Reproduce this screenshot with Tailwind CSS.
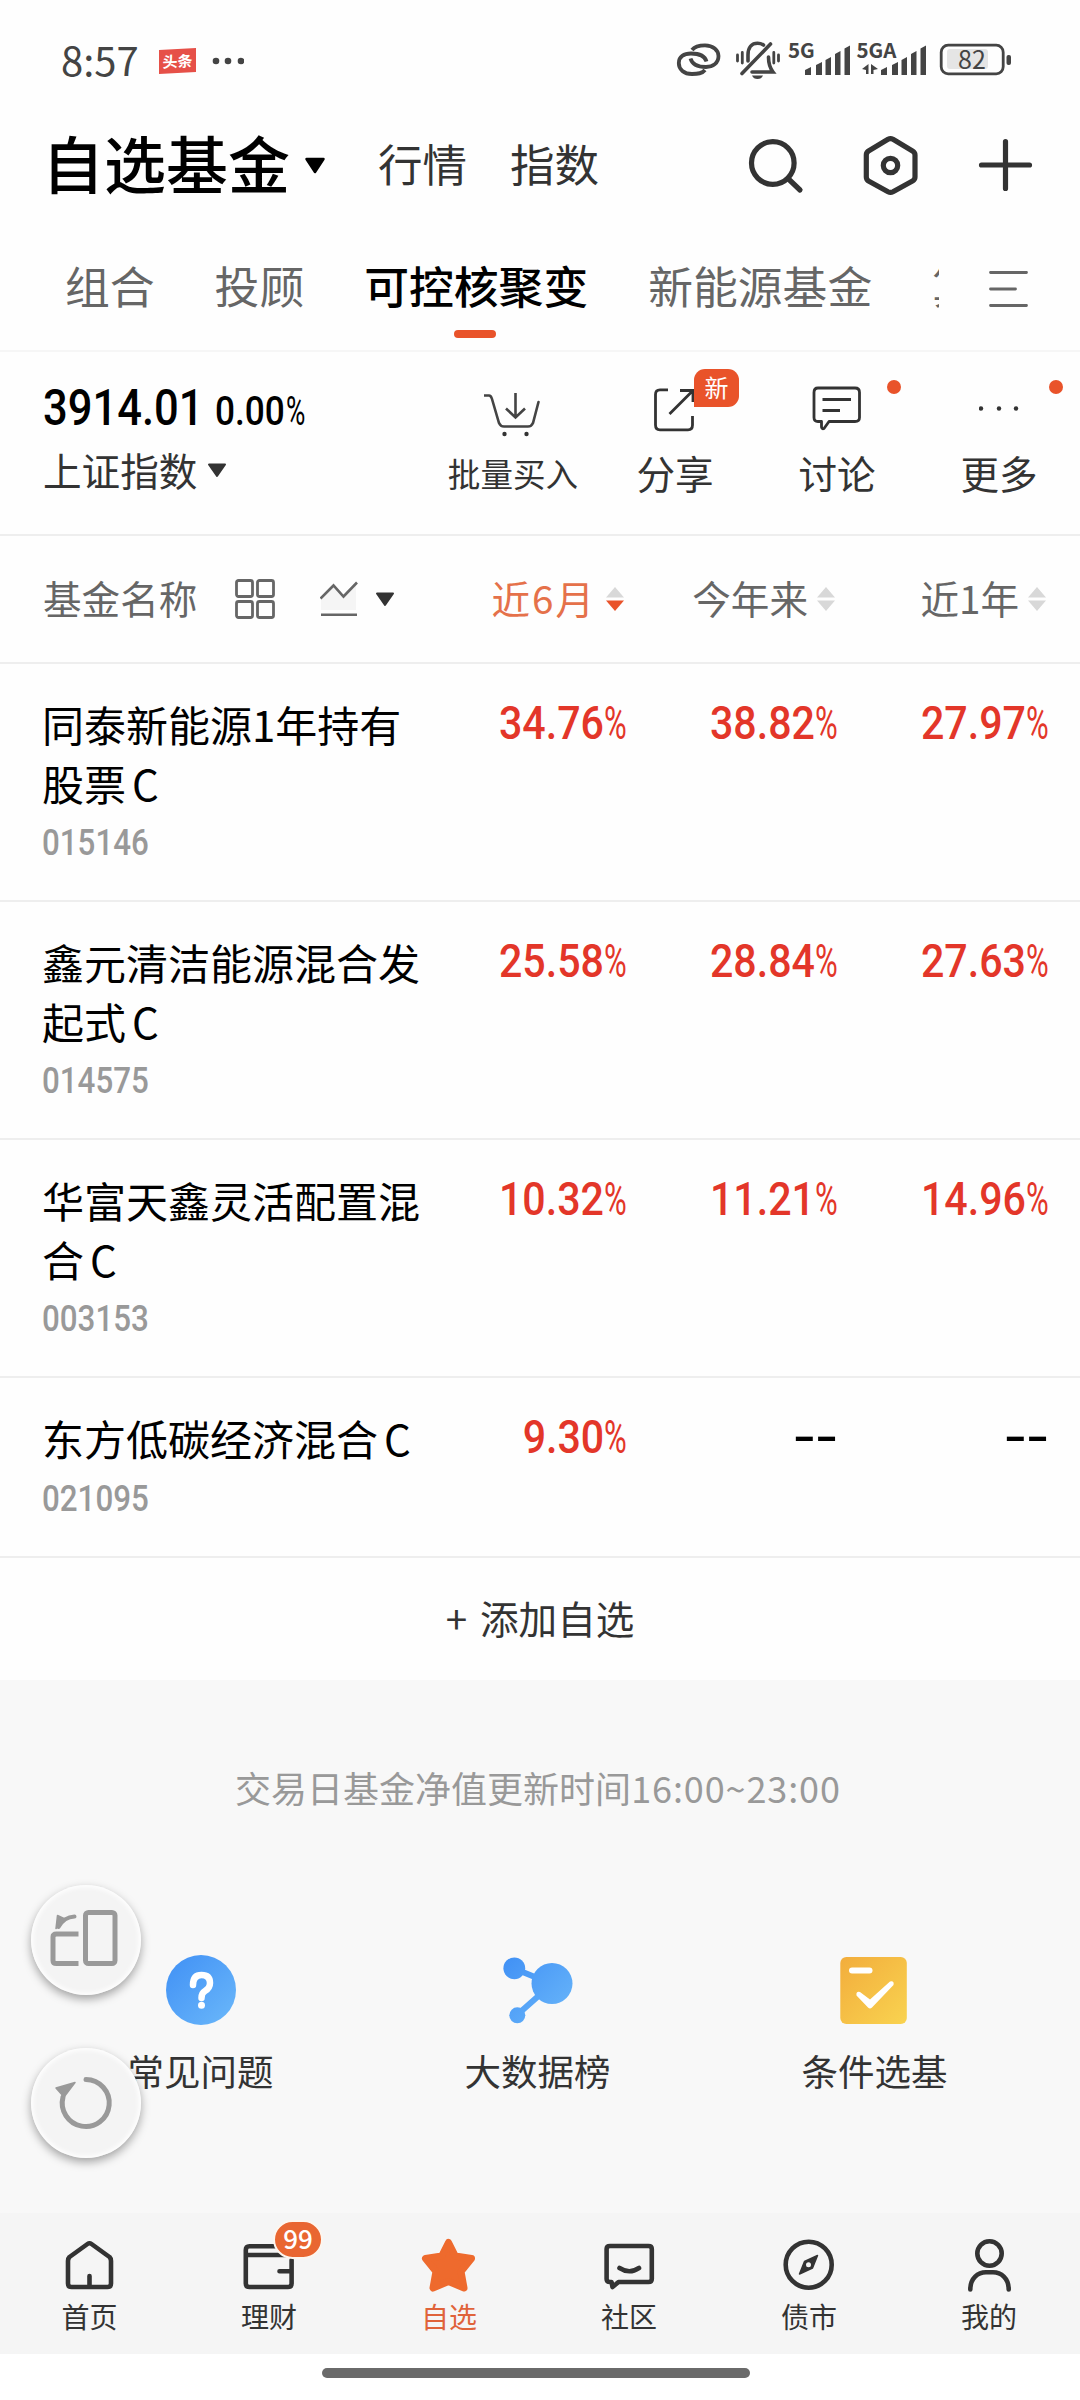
<!DOCTYPE html>
<html lang="zh-CN">
<head>
<meta charset="utf-8">
<title>自选基金</title>
<script src="https://cdn.jsdelivr.net/npm/@tailwindcss/browser@4"></script>
</head>
<body class="bg-white">
<div class="relative flex h-[2400px] w-[1080px] flex-col overflow-hidden bg-[#fefefe] font-['Noto_Sans_CJK_SC',sans-serif] leading-none text-[#333]">

  <!-- status bar -->
  <header class="flex h-[118px] shrink-0 items-start justify-between pl-[61px] pr-[66px] text-[#444]">
    <div class="flex items-center pt-[37px]">
      <span class="w-[98px] pb-[3px] text-[40px] leading-[44px]">8:57</span>
      <span class="flex h-[24px] w-[37px] -skew-y-3 items-center justify-center bg-[#e65048] pb-[2px] text-[15px] font-bold text-white">头条</span>
      <svg class="ml-[16px]" width="32" height="8" fill="#444"><circle cx="4" cy="4" r="3.3"/><circle cx="16" cy="4" r="3.3"/><circle cx="29" cy="4" r="3.3"/></svg>
    </div>
    <svg width="340" height="110" viewBox="674 0 340 110" fill="none" stroke="#444" font-family="Noto Sans CJK SC, sans-serif">
      <g stroke-width="3.8">
        <path d="M692 50 C695 46 699 45.300 705 45.300 C713 45.300 718.500 50 718.500 56 C718.500 63 713 67 706 67 C698 67 692 64 690.500 58.500"/>
        <path d="M705 70 C702 73.700 698 74 692 74 C684 74 678.800 69.500 678.800 63 C678.800 56.500 684 53.500 691 53.500 C699 53.500 705 56 706.500 61.500"/>
      </g>
      <g stroke-width="3.6" stroke-linecap="round">
        <path d="M742 73.500 L770.500 44"/>
        <path d="M748 61 V55 C748 47 752 43.300 757.500 43.300 Q761 43.300 763.500 45"/>
        <path d="M752 72 H773 Q768.500 66 768.500 57"/>
        <path stroke-width="2.800" d="M737.500 55 V61 M742.300 52.500 V63 M773.800 52.500 V63 M778.500 55 V61"/>
      </g>
      <path fill="#444" stroke="none" d="M752 75.500 H763 Q761.500 79 757.500 79 Q753.500 79 752 75.500Z"/>
      <g fill="#444" stroke="none">
        <text x="788" y="57.500" font-size="20.500" font-weight="700">5G</text>
        <path d="M805 70 l6-3 v8 h-6z M816 65 l6-3 v13 h-6z M825.500 60 l5.500-3 v18 h-5.500z M835 54 l5.500-3 v24 h-5.500z M844.500 48.500 l5.500-3 v29.500 h-5.500z"/>
        <text x="856.500" y="57.500" font-size="20.500" font-weight="700">5GA</text>
        <path d="M862 69 L868.500 64 V74 H866 V70Z M871 64 V74 H873.500 V70 L878 69 Z"/>
        <path d="M881 70 l6-3 v8 h-6z M892 65 l6-3 v13 h-6z M901.500 60 l5.500-3 v18 h-5.500z M911 54 l5.500-3 v24 h-5.500z M920.500 48.500 l5.500-3 v29.500 h-5.500z"/>
      </g>
      <rect x="941.200" y="45.200" width="62" height="28.600" rx="7" stroke-width="2.800"/>
      <rect x="947" y="49" width="41" height="20" rx="3" fill="#e5e5e5" stroke="none"/>
      <rect x="1006.500" y="55" width="4.500" height="10" rx="2" fill="#444" stroke="none"/>
      <text x="958" y="69" font-size="25" fill="#444" stroke="none">82</text>
    </svg>
  </header>

  <!-- title row -->
  <div class="flex h-[94px] shrink-0 items-center pl-[42px]">
    <h1 class="pb-[7px] text-[62px] font-medium text-black">自选基金</h1>
    <svg class="ml-[14px] mt-[2px]" width="22" height="18" viewBox="0 0 22 18"><path d="M2.500 2 H19.500 L11 15Z" stroke="#000" stroke-width="2.500" stroke-linejoin="round"/></svg>
    <span class="ml-[52px] pb-[4px] text-[44.500px]">行情</span>
    <span class="ml-[43px] pb-[4px] text-[44.500px]">指数</span>
    <svg class="ml-[147px]" width="60" height="62" viewBox="746 134 60 62" fill="none" stroke="#333" stroke-width="5.200" stroke-linecap="round"><circle cx="772.800" cy="163" r="21.300"/><path d="M788.500 179 L800 190"/></svg>
    <svg class="ml-[55px]" width="60" height="64" viewBox="861 133 60 64" fill="none" stroke="#333" stroke-width="5.200" stroke-linejoin="round"><path d="M888 139.300 Q890.500 138 893 139.300 L912.500 151 Q915 152.500 915 155 V177 Q915 179.500 912.500 181 L893 191.700 Q890.500 193 888 191.700 L868.500 181 Q866.300 179.500 866.300 177 V155 Q866.300 152.500 868.500 151Z"/><circle cx="890.500" cy="165.500" r="7.200"/></svg>
    <svg class="ml-[56px]" width="56" height="56" viewBox="977 138 56 56" stroke="#333" stroke-width="5.200" stroke-linecap="round"><path d="M981.500 166 H1029.500 M1005.500 142.500 V189.500"/></svg>
  </div>

  <!-- group tabs -->
  <nav class="flex h-[140px] shrink-0 items-start border-b-2 border-[#f6f6f6] text-[44.800px] text-[#666]">
    <div class="flex h-[134px] w-[939px] gap-[60px] overflow-hidden whitespace-nowrap pl-[65px] pt-[51px]">
      <span>组合</span>
      <span>投顾</span>
      <span class="flex flex-col items-center font-medium text-black">可控核聚变<i class="mr-[3px] mt-[22px] block h-[8px] w-[42px] rounded-full bg-[#e9532a]"></i></span>
      <span>新能源基金</span>
      <span>算力</span>
    </div>
    <svg class="ml-[50px] mt-[58px]" width="40" height="38" viewBox="989 270 40 38" stroke="#666" stroke-width="2.800" stroke-linecap="round"><path d="M990.500 272.500 H1026.500 M990.500 289 H1015.500 M990.500 305.500 H1026.500"/></svg>
  </nav>

  <!-- index summary and actions -->
  <section class="flex h-[184px] shrink-0 border-b-2 border-[#eee]">
    <div class="w-[432px] pl-[43px] pt-[31px] text-black">
      <div class="flex h-[50px] items-baseline font-[Roboto,sans-serif] font-medium">
        <span class="w-[172px]"><span class="inline-block origin-left scale-x-[.87] text-[50px]">3914.01</span></span>
        <span class="w-[71px]"><span class="inline-block origin-left scale-x-[.88] text-[40px]">0.00</span></span>
        <span class="inline-block w-[20px] origin-left scale-x-[.66] text-[40px] font-normal">%</span>
      </div>
      <div class="mt-[17px] flex items-center text-[38.600px] text-[#333]">上证指数
        <svg class="ml-[10px] mt-[3px]" width="20" height="15" viewBox="0 0 20 15"><path d="M2 1.500 H18 L10 13Z" fill="#333" stroke="#333" stroke-width="2" stroke-linejoin="round"/></svg>
      </div>
    </div>
    <div class="relative flex w-[162px] flex-col items-center pt-[33px]">
      <svg width="58" height="52" viewBox="484 385 58 52" fill="none" stroke="#444" stroke-width="2.600"><path d="M484 395.500 H489 Q491 395.500 492 399 L499 423 Q500.500 426.500 504 426.500 H528 Q531.500 426.500 533 423 L538.500 402" stroke-linecap="round"/><path d="M515.500 393 V417 M506 408.500 L515.500 417.500 L525 408.500"/><circle cx="504.500" cy="434" r="2.200" fill="#333" stroke="none"/><circle cx="526.500" cy="434" r="2.200" fill="#333" stroke="none"/></svg>
      <span class="mt-[20px] text-[32.600px]">批量买入</span>
    </div>
    <div class="relative flex w-[162px] flex-col items-center pt-[33px]">
      <svg width="46" height="48" viewBox="651 385 46 48" fill="none" stroke="#333" stroke-width="2.800"><path d="M667 389.800 H659 Q654.500 389.800 654.500 394.500 V425 Q654.500 429.800 659 429.800 H687 Q691.500 429.800 691.500 425 V416"/><path d="M679 390.500 H692 V402 M691.500 391 L668.500 414"/></svg>
      <span class="mt-[20px] text-[38.600px]">分享</span>
      <span class="absolute left-[100px] top-[17px] flex h-[38px] w-[45px] items-center justify-center rounded-[11px] rounded-bl-none bg-[#e9532a] pb-[2px] text-[24px] text-white">新</span>
    </div>
    <div class="relative flex w-[162px] flex-col items-center pt-[33px]">
      <svg width="52" height="48" viewBox="811 385 52 48" fill="none" stroke="#333" stroke-width="2.800" stroke-linejoin="round"><path d="M818 388 H855 Q859.500 388 859.500 392.500 V417.500 Q859.500 421.500 855 421.500 H829 L824 428.500 Q822 429.500 821.500 427 V421.500 H818 Q814 421.500 814 417.500 V392.500 Q814 388 818 388Z"/><path d="M822.500 399.500 H851 M822.500 410.500 H840"/></svg>
      <span class="mt-[20px] text-[38.600px]">讨论</span>
      <i class="absolute left-[131px] top-[28px] size-[14px] rounded-full bg-[#e9532a]"></i>
    </div>
    <div class="relative flex w-[162px] flex-col items-center pt-[33px]">
      <svg width="40" height="48" viewBox="979 385 40 48" fill="#333"><circle cx="981" cy="408.500" r="2.200"/><circle cx="999" cy="408.500" r="2.200"/><circle cx="1016" cy="408.500" r="2.200"/></svg>
      <span class="mt-[20px] text-[38.600px]">更多</span>
      <i class="absolute left-[131px] top-[28px] size-[14px] rounded-full bg-[#e9532a]"></i>
    </div>
  </section>

  <!-- table header -->
  <div class="flex h-[128px] shrink-0 items-center border-b-2 border-[#eee] pl-[43px] text-[38.600px] text-[#666]">
    <span class="w-[155px] pb-[4px]">基金名称</span>
    <svg class="ml-[37px]" width="40" height="42" viewBox="0 0 40 42" fill="none" stroke="#666" stroke-width="2.800"><rect x="1.500" y="2.500" width="16" height="16" rx="2"/><rect x="22.500" y="2.500" width="16" height="16" rx="2"/><rect x="1.500" y="23.500" width="16" height="16" rx="2"/><rect x="22.500" y="23.500" width="16" height="16" rx="2"/></svg>
    <svg class="ml-[45px]" width="38" height="36" viewBox="320 582 38 36" fill="none" stroke="#666" stroke-width="2.600"><path d="M321 599.500 L333.500 587 L343.500 597.500 L356 584.500 V611 H321Z" fill="#f5f5f5" stroke="none"/><path d="M320.500 599.500 L333.500 586.500 L343.500 597.500 L357 583.500 M321 615.800 H357"/></svg>
    <svg class="ml-[17px]" width="20" height="15" viewBox="0 0 20 15"><path d="M2 1.500 H18 L10 13Z" fill="#333" stroke="#333" stroke-width="2" stroke-linejoin="round"/></svg>
    <div class="ml-[30px] flex w-[199px] items-center justify-end text-[#e5714a]"><span class="pb-[4px]">近<span class="mx-[2px]">6</span>月</span><svg class="ml-[12px]" width="18" height="26" viewBox="0 0 18 26"><path d="M9 1 L18 11.500 H0Z" fill="#d8d8d8"/><path d="M0 14.500 H18 L9 25Z" fill="#e9532a"/></svg></div>
    <div class="flex w-[211px] items-center justify-end"><span class="pb-[4px]">今年来</span><svg class="ml-[9px]" width="18" height="26" viewBox="0 0 18 26"><path d="M9 1 L18 11.500 H0Z M0 14.500 H18 L9 25Z" fill="#d8d8d8"/></svg></div>
    <div class="flex w-[211px] items-center justify-end"><span class="pb-[4px]">近1年</span><svg class="ml-[9px]" width="18" height="26" viewBox="0 0 18 26"><path d="M9 1 L18 11.500 H0Z M0 14.500 H18 L9 25Z" fill="#d8d8d8"/></svg></div>
  </div>

  <!-- fund rows -->
  <div class="flex h-[238px] shrink-0 border-b-2 border-[#eee] pl-[42px] pt-[31px]">
    <div class="w-[374px] whitespace-nowrap text-[42px] leading-[58.500px] text-black">同泰新能源1年持有<br>股票<span class="ml-[6px]">C</span>
      <div class="mt-[13px] origin-left scale-x-[.87] font-[Roboto,sans-serif] text-[36px] font-medium leading-[36px] text-[#999]">015146</div></div>
    <div class="flex w-[211px] items-baseline justify-end pt-[4px] font-[Roboto,sans-serif] text-[47px] font-medium text-[#e33629]"><span class="inline-block origin-right scale-x-[.875]">34.76</span><span class="inline-block w-[23px] origin-left scale-x-[.66] font-normal">%</span></div>
    <div class="flex w-[211px] items-baseline justify-end pt-[4px] font-[Roboto,sans-serif] text-[47px] font-medium text-[#e33629]"><span class="inline-block origin-right scale-x-[.875]">38.82</span><span class="inline-block w-[23px] origin-left scale-x-[.66] font-normal">%</span></div>
    <div class="flex w-[211px] items-baseline justify-end pt-[4px] font-[Roboto,sans-serif] text-[47px] font-medium text-[#e33629]"><span class="inline-block origin-right scale-x-[.875]">27.97</span><span class="inline-block w-[23px] origin-left scale-x-[.66] font-normal">%</span></div>
  </div>
  <div class="flex h-[238px] shrink-0 border-b-2 border-[#eee] pl-[42px] pt-[31px]">
    <div class="w-[374px] whitespace-nowrap text-[42px] leading-[58.500px] text-black">鑫元清洁能源混合发<br>起式<span class="ml-[6px]">C</span>
      <div class="mt-[13px] origin-left scale-x-[.87] font-[Roboto,sans-serif] text-[36px] font-medium leading-[36px] text-[#999]">014575</div></div>
    <div class="flex w-[211px] items-baseline justify-end pt-[4px] font-[Roboto,sans-serif] text-[47px] font-medium text-[#e33629]"><span class="inline-block origin-right scale-x-[.875]">25.58</span><span class="inline-block w-[23px] origin-left scale-x-[.66] font-normal">%</span></div>
    <div class="flex w-[211px] items-baseline justify-end pt-[4px] font-[Roboto,sans-serif] text-[47px] font-medium text-[#e33629]"><span class="inline-block origin-right scale-x-[.875]">28.84</span><span class="inline-block w-[23px] origin-left scale-x-[.66] font-normal">%</span></div>
    <div class="flex w-[211px] items-baseline justify-end pt-[4px] font-[Roboto,sans-serif] text-[47px] font-medium text-[#e33629]"><span class="inline-block origin-right scale-x-[.875]">27.63</span><span class="inline-block w-[23px] origin-left scale-x-[.66] font-normal">%</span></div>
  </div>
  <div class="flex h-[238px] shrink-0 border-b-2 border-[#eee] pl-[42px] pt-[31px]">
    <div class="w-[374px] whitespace-nowrap text-[42px] leading-[58.500px] text-black">华富天鑫灵活配置混<br>合<span class="ml-[6px]">C</span>
      <div class="mt-[13px] origin-left scale-x-[.87] font-[Roboto,sans-serif] text-[36px] font-medium leading-[36px] text-[#999]">003153</div></div>
    <div class="flex w-[211px] items-baseline justify-end pt-[4px] font-[Roboto,sans-serif] text-[47px] font-medium text-[#e33629]"><span class="inline-block origin-right scale-x-[.875]">10.32</span><span class="inline-block w-[23px] origin-left scale-x-[.66] font-normal">%</span></div>
    <div class="flex w-[211px] items-baseline justify-end pt-[4px] font-[Roboto,sans-serif] text-[47px] font-medium text-[#e33629]"><span class="inline-block origin-right scale-x-[.875]">11.21</span><span class="inline-block w-[23px] origin-left scale-x-[.66] font-normal">%</span></div>
    <div class="flex w-[211px] items-baseline justify-end pt-[4px] font-[Roboto,sans-serif] text-[47px] font-medium text-[#e33629]"><span class="inline-block origin-right scale-x-[.875]">14.96</span><span class="inline-block w-[23px] origin-left scale-x-[.66] font-normal">%</span></div>
  </div>
  <div class="flex h-[180px] shrink-0 border-b-2 border-[#eee] pl-[42px] pt-[31px]">
    <div class="w-[374px] whitespace-nowrap text-[42px] leading-[58.500px] text-black">东方低碳经济混合<span class="ml-[6px]">C</span>
      <div class="mt-[13px] origin-left scale-x-[.87] font-[Roboto,sans-serif] text-[36px] font-medium leading-[36px] text-[#999]">021095</div></div>
    <div class="flex w-[211px] items-baseline justify-end pt-[4px] font-[Roboto,sans-serif] text-[47px] font-medium text-[#e33629]"><span class="inline-block origin-right scale-x-[.875]">9.30</span><span class="inline-block w-[23px] origin-left scale-x-[.66] font-normal">%</span></div>
    <div class="flex w-[211px] justify-end pt-[4px] font-[Roboto,sans-serif] text-[47px] font-medium text-black"><span class="inline-block origin-right scale-x-[1.400]">--</span></div>
    <div class="flex w-[211px] justify-end pt-[4px] font-[Roboto,sans-serif] text-[47px] font-medium text-black"><span class="inline-block origin-right scale-x-[1.400]">--</span></div>
  </div>
  <div class="flex h-[122px] shrink-0 justify-center pt-[40px] text-[38.600px]"><span class="mr-[13px]">+</span>添加自选</div>

  <!-- notice and shortcuts -->
  <section class="h-[533px] shrink-0 bg-[#f8f8f8] pt-[89px]">
    <p class="pr-[4px] text-center text-[36px] text-[#999]">交易日基金净值更新时间<span class="tracking-[.9px]">16:00~23:00</span></p>
    <div class="mt-[148px] flex px-[32px] text-[36.500px]">
      <div class="flex w-[337px] flex-col items-center">
        <svg width="74" height="74" viewBox="163 1953 74 74"><defs><linearGradient id="blue" x1="0" y1="0" x2="1" y2="1"><stop offset="0" stop-color="#4090f5"/><stop offset="1" stop-color="#6bb8fa"/></linearGradient></defs><circle cx="200" cy="1990" r="35" fill="url(#blue)"/><path d="M192 1985 Q192 1975 200.500 1975 Q209 1975 209 1983 Q209 1988 204 1991 Q200.500 1993 200.500 1998" fill="none" stroke="#fff" stroke-width="6.500" stroke-linecap="round"/><circle cx="200.500" cy="2005.300" r="3.500" fill="#fff"/></svg>
        <span class="mt-[26px]">常见问题</span>
      </div>
      <div class="flex w-[337px] flex-col items-center">
        <svg width="74" height="74" viewBox="501 1953 74 74" fill="url(#blue2)"><defs><linearGradient id="blue2" gradientUnits="userSpaceOnUse" x1="503" y1="1957" x2="572" y2="2024"><stop offset="0" stop-color="#4090f5"/><stop offset="1" stop-color="#6bb8fa"/></linearGradient></defs><path d="M514 1968.500 L552 1984 L517 2015" fill="none" stroke="url(#blue2)" stroke-width="6"/><circle cx="514.300" cy="1968.300" r="10.900"/><circle cx="552" cy="1983.500" r="20.500"/><circle cx="517.300" cy="2015.300" r="8"/></svg>
        <span class="mt-[26px]">大数据榜</span>
      </div>
      <div class="flex w-[337px] flex-col items-center">
        <svg width="74" height="74" viewBox="838 1953 74 74"><defs><linearGradient id="gold" x1="0" y1="0" x2="1" y2="1"><stop offset="0" stop-color="#f2ad3c"/><stop offset="1" stop-color="#f9d350"/></linearGradient></defs><rect x="840.300" y="1957" width="66.500" height="67" rx="6" fill="url(#gold)"/><path d="M852 1970.500 H869.500" stroke="#fff" stroke-width="6" stroke-linecap="round"/><path d="M856.500 1995.500 Q855.800 1991 860 1992 L870 1999.500 L890 1981.500 Q894.500 1980.500 893.500 1985 L872 2007.500 Q870 2009.500 868 2007.500Z" fill="#fff"/></svg>
        <span class="mt-[26px]">条件选基</span>
      </div>
    </div>
  </section>

  <!-- bottom navigation -->
  <nav class="flex h-[141px] shrink-0 bg-[#f5f5f5] text-[28px]">
    <div class="flex w-[179px] flex-col items-center pt-[23px]">
      <svg width="56" height="58" viewBox="62 2236 56 58" fill="none" stroke="#333" stroke-width="4.600" stroke-linecap="round" stroke-linejoin="round"><path d="M87.500 2244 Q89.500 2242.500 91.500 2244 L109.500 2257 Q111 2258.500 111 2261 V2283.500 Q111 2287 107.500 2287 H71.500 Q68 2287 68 2283.500 V2261 Q68 2258.500 69.500 2257Z M89.500 2276 V2286"/></svg>
      <span class="mt-[8px]">首页</span>
    </div>
    <div class="relative flex w-[180px] flex-col items-center pt-[23px]">
      <svg width="56" height="58" viewBox="242 2236 56 58" fill="none" stroke="#333" stroke-width="4.600" stroke-linecap="round" stroke-linejoin="round"><path d="M292.600 2260 V2283.500 Q292.600 2287 289 2287 H250.500 Q246.800 2287 246.800 2283.500 V2250 Q246.800 2246.300 250.500 2246.300 H289 M247 2255 H292 M280.500 2271.300 H292"/></svg>
      <span class="mt-[8px]">理财</span>
      <span class="absolute left-[94px] top-[7px] flex h-[39px] w-[50px] items-center justify-center rounded-full border-2 border-[#fdf6ef] bg-[#e96631] pb-[3px] text-[26px] font-medium text-white">99</span>
    </div>
    <div class="flex w-[180px] flex-col items-center pt-[23px] text-[#e0633a]">
      <svg width="56" height="58" viewBox="422 2236 56 58"><path d="M449.500 2242.500 L456.300 2256 L472.500 2258.500 L462 2271.500 L465 2288 L449.500 2281.500 L434 2288 L437 2271.500 L426.500 2258.500 L442.700 2256Z" fill="#ee6a2d" stroke="#ee6a2d" stroke-width="7" stroke-linejoin="round"/></svg>
      <span class="mt-[8px]">自选</span>
    </div>
    <div class="flex w-[180px] flex-col items-center pt-[23px]">
      <svg width="56" height="58" viewBox="601 2236 56 58" fill="none" stroke="#333" stroke-width="4.600" stroke-linecap="round" stroke-linejoin="round"><path d="M610 2246 H648.500 Q651.800 2246 651.800 2249 V2279 Q651.800 2282 648.500 2282 H618.500 L612.500 2287 L611.500 2282 H610 Q606.600 2282 606.600 2279 V2249 Q606.600 2246 610 2246Z M619.500 2268 Q629.500 2274.500 639 2268"/></svg>
      <span class="mt-[8px]">社区</span>
    </div>
    <div class="flex w-[180px] flex-col items-center pt-[23px]">
      <svg width="56" height="58" viewBox="781 2236 56 58"><circle cx="808.700" cy="2264.700" r="23" fill="none" stroke="#333" stroke-width="4.600"/><path d="M817.500 2255.500 L812.500 2268 L799.500 2274 L804.500 2261.500Z" fill="#333" stroke="#333" stroke-width="1.500" stroke-linejoin="round"/><circle cx="808.500" cy="2264.700" r="2.500" fill="#f5f5f5"/></svg>
      <span class="mt-[8px]">债市</span>
    </div>
    <div class="flex w-[180px] flex-col items-center pt-[23px]">
      <svg width="56" height="58" viewBox="961 2236 56 58" fill="none" stroke="#333" stroke-width="4.600" stroke-linecap="round"><circle cx="989.500" cy="2253.500" r="12.200"/><path d="M970.300 2289.500 C970.300 2278 978 2272.300 986 2272.300 H993 C1001 2272.300 1008.700 2278 1008.700 2289.500"/></svg>
      <span class="mt-[8px]">我的</span>
    </div>
  </nav>
  <div class="flex flex-1 justify-center bg-white pt-[14px]"><i class="mr-[8px] block h-[10px] w-[428px] rounded-full bg-[#6a6a6a]"></i></div>

  <!-- floating buttons -->
  <div class="absolute left-[31px] top-[1885px] flex flex-col gap-[53px]">
    <div class="size-[110px] rounded-full bg-[#f4f4f4] shadow-[0_4px_10px_rgba(0,0,0,.35),inset_0_0_5px_2px_#fff]">
      <svg width="110" height="110" viewBox="31 1885 110 110" fill="none" stroke="#999" stroke-width="5"><rect x="85.500" y="1912.500" width="29.500" height="51" rx="3"/><path d="M78.500 1934 H56.500 Q53 1934 53 1937 V1960.500 Q53 1963.500 56.500 1963.500 H78.500"/><path d="M74.500 1916.500 Q64 1917 58.500 1927" stroke-width="4" stroke-linecap="round"/><path d="M57.500 1915.500 L56 1928.500 L66 1919.500Z" fill="#999" stroke-width="1.500" stroke-linejoin="round"/></svg>
    </div>
    <div class="size-[110px] rounded-full bg-[#f4f4f4] shadow-[0_4px_10px_rgba(0,0,0,.35),inset_0_0_5px_2px_#fff]">
      <svg width="110" height="110" viewBox="31 2048 110 110" fill="none" stroke="#999" stroke-width="5" stroke-linecap="round"><path d="M86 2079.500 A23.500 23.500 0 1 1 63 2097"/><path d="M56 2088 L75 2082.500 L64 2097Z" fill="#999" stroke-width="1.500" stroke-linejoin="round"/></svg>
    </div>
  </div>
</div>
</body>
</html>
